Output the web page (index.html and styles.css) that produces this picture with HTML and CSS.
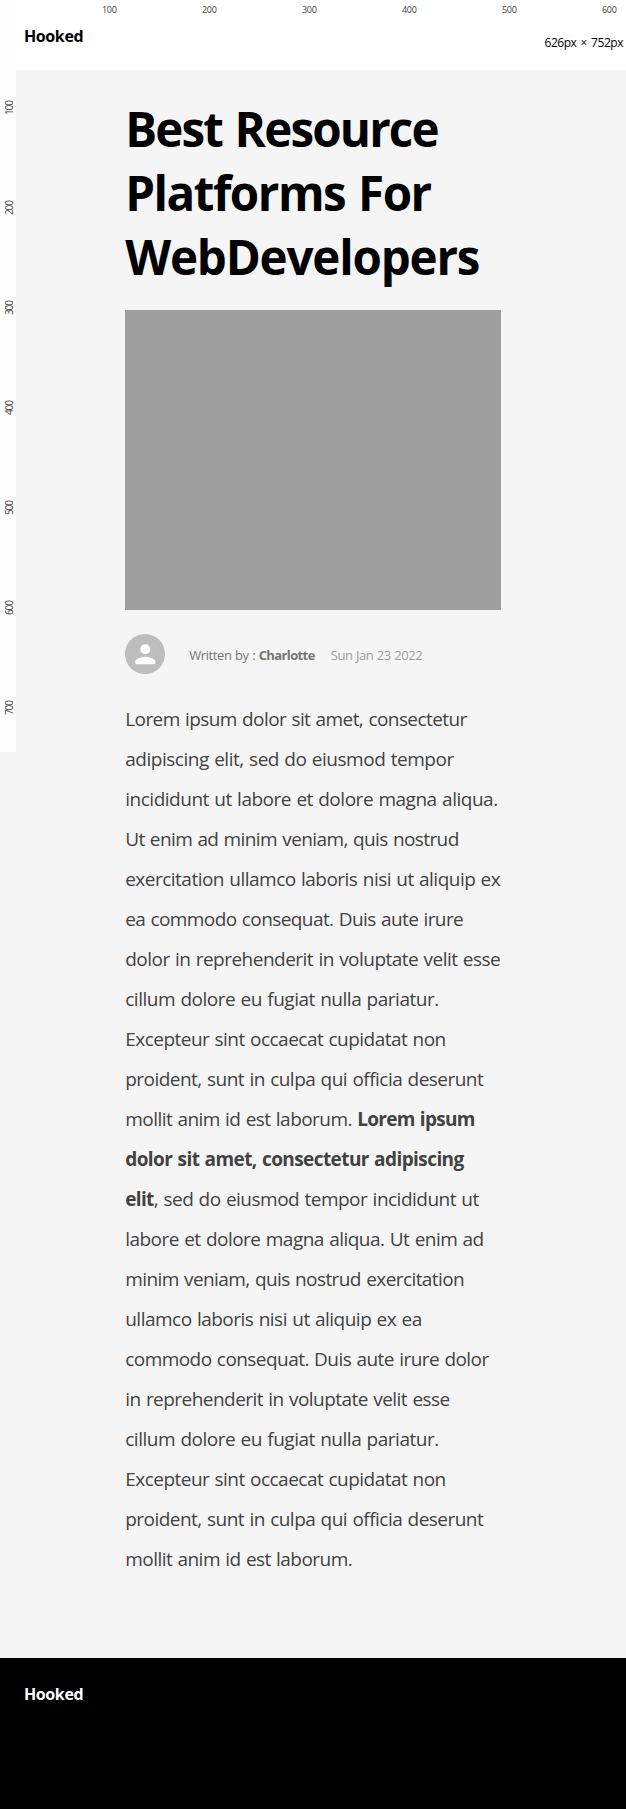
FILE: index.html
```html
<!DOCTYPE html>
<html lang="en">
<head>
<meta charset="utf-8">
<title>Hooked</title>
<link rel="stylesheet" href="styles.css">
</head>
<body>
<header class="site-header"><span class="brand">Hooked</span></header>
<main class="article">
  <h1 class="title"><span class="line" data-width="312.5">Best Resource</span> <span class="line" data-width="305.5">Platforms For</span> <span class="line" data-width="354">WebDevelopers</span></h1>
  <div class="cover"></div>
  <div class="byline">
    <svg class="avatar" viewBox="0 0 40 40"><circle cx="20" cy="20" r="20" fill="#bdbdbd"/><path fill="#fff" d="M20.300 20.200a5 5 0 1 0 0-10 5 5 0 0 0 0 10zm0 2.500c-3.400 0-10 1.700-10 5v1.300c0 .7.500 1.200 1.200 1.200h17.600c.7 0 1.200-.5 1.200-1.200v-1.300c0-3.300-6.600-5-10-5z"/></svg>
    <span class="author"><span data-width="69.5">Written by : </span><b data-width="56">Charlotte</b></span>
    <span class="date" data-width="91.5">Sun Jan 23 2022</span>
  </div>
  <p class="body">
    <span class="line" data-width="341.5">Lorem ipsum dolor sit amet, consectetur</span>
    <span class="line" data-width="328.5">adipiscing elit, sed do eiusmod tempor</span>
    <span class="line" data-width="372.5">incididunt ut labore et dolore magna aliqua.</span>
    <span class="line" data-width="333.5">Ut enim ad minim veniam, quis nostrud</span>
    <span class="line" data-width="375">exercitation ullamco laboris nisi ut aliquip ex</span>
    <span class="line" data-width="338">ea commodo consequat. Duis aute irure</span>
    <span class="line" data-width="375">dolor in reprehenderit in voluptate velit esse</span>
    <span class="line" data-width="313.5">cillum dolore eu fugiat nulla pariatur.</span>
    <span class="line" data-width="320.5">Excepteur sint occaecat cupidatat non</span>
    <span class="line" data-width="358">proident, sunt in culpa qui officia deserunt</span>
    <span class="line"><span data-width="232">mollit anim id est laborum. </span><b data-width="117.5">Lorem ipsum</b></span>
    <span class="line"><b data-width="338.5">dolor sit amet, consectetur adipiscing</b></span>
    <span class="line"><b data-width="28.5">elit</b><span data-width="325">, sed do eiusmod tempor incididunt ut</span></span>
    <span class="line" data-width="358.5">labore et dolore magna aliqua. Ut enim ad</span>
    <span class="line" data-width="339">minim veniam, quis nostrud exercitation</span>
    <span class="line" data-width="296.5">ullamco laboris nisi ut aliquip ex ea</span>
    <span class="line" data-width="363.5">commodo consequat. Duis aute irure dolor</span>
    <span class="line" data-width="324.5">in reprehenderit in voluptate velit esse</span>
    <span class="line" data-width="313.5">cillum dolore eu fugiat nulla pariatur.</span>
    <span class="line" data-width="320.5">Excepteur sint occaecat cupidatat non</span>
    <span class="line" data-width="358">proident, sunt in culpa qui officia deserunt</span>
    <span class="line" data-width="227">mollit anim id est laborum.</span>
  </p>
</main>
<footer class="site-footer"><span class="brand">Hooked</span></footer>
<div class="ruler ruler-x"><span>100</span><span>200</span><span>300</span><span>400</span><span>500</span><span>600</span></div>
<div class="ruler ruler-y"><span>100</span><span>200</span><span>300</span><span>400</span><span>500</span><span>600</span><span>700</span></div>
<div class="viewport-size"><span data-width="78.5">626px × 752px</span></div>
<script src="fit.js"></script>
</body>
</html>
```
FILE: fit.js
```js
document.querySelectorAll("[data-width]").forEach(function (el) {
  var gap = Number(el.dataset.width) - el.getBoundingClientRect().width;
  el.style.letterSpacing = (gap / el.textContent.length).toFixed(3) + "px";
});
```
FILE: styles.css
```css
* { box-sizing: border-box; }
body {
  margin: 0;
  position: relative;
  background: #f5f5f5;
  font-family: "Open Sans", "Noto Sans", sans-serif;
  color: #000;
}
.site-header, .site-footer { padding: 24px 24px 0; }
.site-header { height: 70px; background: #fff; }
.site-footer { height: 151px; background: #000; color: #fff; }
.brand { display: block; font-size: 16px; line-height: 24px; font-weight: 700; letter-spacing: -0.4px; }
.article { width: 60%; height: 1588px; margin: 0 auto; padding-top: 27px; }
.line { display: block; width: max-content; white-space: pre; font-variant-ligatures: none; }
.title { margin: 0; font-size: 47.5px; line-height: 64px; font-weight: 700; word-spacing: 2px; }
.cover { height: 300px; margin-top: 21px; background: #9e9e9e; }
.byline { display: flex; align-items: center; height: 40px; margin-top: 24px; font-size: 13px; line-height: 18px; white-space: pre; word-spacing: 0.5px; }
.avatar { width: 40px; height: 40px; flex: none; }
.author { margin: 2px 0 0 24px; color: #757575; }
.date { margin: 2px 0 0 16px; color: #9e9e9e; }
.body { margin: 25px 0 0; font-size: 19px; line-height: 40px; color: #424242; word-spacing: 0.9px; }
.ruler { position: absolute; font-size: 9px; line-height: 12px; color: #444; display: flex; }
.ruler span { flex: none; }
.ruler-x { top: 4px; left: 102px; letter-spacing: -0.3px; }
.ruler-x span { width: 100px; }
.ruler-x span:last-child { width: 20px; }
.ruler-y { top: 0; left: 0; width: 16px; height: 752px; padding: 58px 0 0 2px; flex-direction: column; background: #fdfdfd; font-size: 10px; letter-spacing: -1.1px; }
.ruler-y span { height: 100px; width: 14px; writing-mode: vertical-rl; transform: rotate(180deg); line-height: 14px; text-align: center; }
.viewport-size { position: absolute; top: 34px; right: 3px; font-size: 12px; line-height: 18px; white-space: nowrap; word-spacing: 1.5px; }
```
